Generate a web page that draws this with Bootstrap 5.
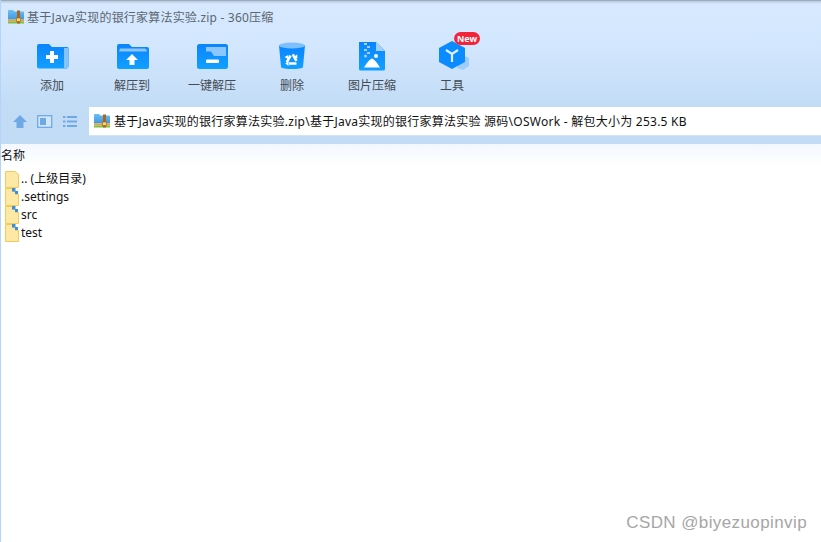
<!DOCTYPE html>
<html lang="zh">
<head>
    <meta charset="UTF-8">
    <title>360压缩</title>
    <link href="https://cdn.jsdelivr.net/npm/bootstrap@5.3.0/dist/css/bootstrap.min.css" rel="stylesheet">
    <style>
        html, body { height: 100%; }
        body {
            font-family: "Noto Sans", "Noto Sans CJK SC", sans-serif;
            font-size: 12px;
            color: #111;
            background: #fff;
            overflow: hidden;
        }
        .app-win { height: 542px; border-left: 1px solid #b5d5f8; position: relative; }
        .app-head {
            height: 144px;
            background: linear-gradient(180deg, #d6e9ff 0, #d2e6fd 50px, #c2dcf6 106px, #c2dcf6 144px);
            position: relative;
        }
        .app-head::before {
            content: ""; position: absolute; left: 0; right: 0; top: 0; height: 4px;
            background: linear-gradient(180deg, #8f9cab 0, rgba(180, 198, 218, .7) 40%, rgba(214, 233, 255, 0) 100%);
        }
        .title-row { height: 32px; padding: 10px 0 0 7px; color: #5c6670; gap: 3px; }
        .title-row svg { margin-top: -1px; }
        .title-row span { line-height: 16px; letter-spacing: .2px; }
        .tool-row { padding-left: 11px; height: 72px; }
        .tool-item { width: 80px; position: relative; color: #444b52; padding-top: 10px; }
        .tool-ico { width: 34px; height: 30px; display: block; overflow: visible; }
        .tool-lbl { margin-top: 5px; line-height: 18px; }
        .new-tag {
            position: absolute; left: 42px; top: 0; width: 26px; height: 13px;
            border-radius: 7px; background: #f5233a; color: #fff;
            font-size: 9px; font-weight: 700; line-height: 13px; text-align: center;
        }
        .addr-row { height: 28px; margin-top: 3px; }
        .nav-btns { width: 88px; padding-left: 11px; gap: 9px; }
        .addr-box {
            background: #fff; height: 29px; padding-left: 5px; gap: 4px;
            border-bottom: 1px solid #d5e4f4; color: #111; white-space: nowrap;
        }
        .addr-box span { letter-spacing: .25px; padding-top: 2px; }
        .list-head {
            height: 22px; line-height: 24px;
            background: linear-gradient(180deg, #f3f8fe 0, #ffffff 100%);
        }
        .file-list { padding: 4px 0 0 4px; }
        .file-row { height: 18px; gap: 2px; line-height: 18px; }
        .file-row svg { flex: none; }
        .wmark {
            position: absolute; right: 14px; bottom: 7px;
            font-family: "Liberation Sans", sans-serif; font-size: 17px; color: #a6a6a6; letter-spacing: .4px;
        }
    </style>
</head>
<body>
<svg width="0" height="0" class="position-absolute">
    <defs>
        <linearGradient id="blueg" x1="0" y1="0" x2="0" y2="1">
            <stop offset="0" stop-color="#0a84ff"/><stop offset="1" stop-color="#12a0ff"/>
        </linearGradient>
        <linearGradient id="zipg" x1="0" y1="0" x2="0" y2="1">
            <stop offset="0" stop-color="#6cc0f5"/><stop offset="1" stop-color="#3f97e0"/>
        </linearGradient>
        <symbol id="zipico" viewBox="0 0 16 16">
            <path d="M0 2a1 1 0 0 1 1-1h4l1.500 1.500H15a1 1 0 0 1 1 1v7H0z" fill="url(#zipg)"/>
            <rect y="10.500" width="16" height="2" fill="#f0a030"/>
            <rect y="12.500" width="16" height="2" fill="#7cc04a"/>
            <rect x="9" y="1.500" width="3" height="13" fill="#a8671e"/>
            <rect x="8.500" y="9" width="4" height="3.500" fill="#f7d774" stroke="#a8671e" stroke-width=".7"/>
        </symbol>
        <symbol id="folderico" viewBox="0 0 14 17">
            <path d="M.5.500h9.500l3.500 3v13H.5z" fill="#fee8a6" stroke="#f3cb5c"/>
        </symbol>
        <symbol id="zfolderico" viewBox="0 0 14 18">
            <path d="M.5.500h7v3h3v3h3v11H.5z" fill="#fee8a6" stroke="#f3cb5c"/>
            <rect x="7" y="0" width="3.500" height="3.500" fill="#3f8fd8"/>
            <rect x="10" y="3" width="3" height="3" fill="#3f8fd8"/>
        </symbol>
    </defs>
</svg>

<div class="app-win d-flex flex-column">
    <div class="app-head">
        <div class="title-row d-flex align-items-start">
            <svg width="16" height="16"><use href="#zipico"/></svg>
            <span>基于Java实现的银行家算法实验.zip - 360压缩</span>
        </div>

        <div class="tool-row d-flex">
            <div class="tool-item d-flex flex-column align-items-center">
                <svg class="tool-ico" viewBox="0 0 34 30">
                    <path d="M2 4a2 2 0 0 1 2-2h10l3 3h15a1.500 1.500 0 0 1 1.500 1.500v18a2 2 0 0 1-2 2H4a2 2 0 0 1-2-2z" fill="url(#blueg)"/>
                    <rect x="29" y="6" width="4" height="20" fill="#85c2ff"/>
                    <path d="M15 9h4v4h4v4h-4v4h-4v-4h-4v-4h4z" fill="#fff"/>
                </svg>
                <div class="tool-lbl">添加</div>
            </div>
            <div class="tool-item d-flex flex-column align-items-center">
                <svg class="tool-ico" viewBox="0 0 34 30">
                    <path d="M2 4a2 2 0 0 1 2-2h10l3 3h15a2 2 0 0 1 2 2v18a2 2 0 0 1-2 2H4a2 2 0 0 1-2-2z" fill="url(#blueg)"/>
                    <path d="M4 9.500l1-3h24.500a2 2 0 0 1 2 1.500l.5 1.500z" fill="#8cc6ff"/>
                    <path d="M17 12l6 6h-3.500v5h-5v-5H11z" fill="#fff"/>
                </svg>
                <div class="tool-lbl">解压到</div>
            </div>
            <div class="tool-item d-flex flex-column align-items-center">
                <svg class="tool-ico" viewBox="0 0 34 30">
                    <rect x="2" y="2" width="31" height="25" rx="2.500" fill="url(#blueg)"/>
                    <path d="M11 5h20v9H19l-3-4.500h-5z" fill="#8cc6ff"/>
                    <rect x="11" y="17.500" width="13" height="3.500" rx="1" fill="#fff"/>
                </svg>
                <div class="tool-lbl">一键解压</div>
            </div>
            <div class="tool-item d-flex flex-column align-items-center">
                <svg class="tool-ico" viewBox="0 0 34 30">
                    <path d="M4 3.500h26l-2 21.500c-.2 1.500-5.500 2-11 2s-10.800-.5-11-2z" fill="url(#blueg)"/>
                    <ellipse cx="17" cy="3.500" rx="13" ry="3" fill="#7cc0ff"/>
                    <path d="M17 11l6 10.500H11z" fill="none" stroke="#fff" stroke-width="2.600" stroke-linejoin="round" stroke-dasharray="7.500 4.600" stroke-dashoffset="-1.500"/>
                    <path d="M22.200 12.500l.2 4-3.500-1.800zM13.500 19l-3.200 2.500 3.200 2.500zM9.500 15l3.500 2 .3-4z" fill="#fff"/>
                </svg>
                <div class="tool-lbl">删除</div>
            </div>
            <div class="tool-item d-flex flex-column align-items-center">
                <svg class="tool-ico" viewBox="0 0 34 30">
                    <path d="M4 0h17l9 9v18a1.500 1.500 0 0 1-1.500 1.500h-23A1.500 1.500 0 0 1 4 27z" fill="url(#blueg)"/>
                    <path d="M21 0l9 9h-9z" fill="#9fd0ff"/>
                    <path d="M9 1h3v2H9zM12 4h3v2h-3zM9 7h3v2H9zM12 10h3v2h-3z" fill="#9fd0ff"/>
                    <circle cx="10.500" cy="14" r="1.500" fill="#9fd0ff"/>
                    <circle cx="21" cy="14" r="2" fill="#fff"/>
                    <path d="M9 25.500c2-3 5-8 8-9 3 1 6 6 8 9z" fill="#fff"/>
                </svg>
                <div class="tool-lbl">图片压缩</div>
            </div>
            <div class="tool-item d-flex flex-column align-items-center">
                <svg class="tool-ico" viewBox="0 0 34 30">
                    <path d="M27 13l7 3v8l-6 4-6-2z" fill="#9fcdfb"/>
                    <path d="M17-1l13 7v14l-13 7-13-7V6z" fill="#0a8bff"/>
                    <path d="M11 8l6 4 6-4M17 12v8" fill="none" stroke="#dff0ff" stroke-width="2.200"/>
                </svg>
                <div class="new-tag">New</div>
                <div class="tool-lbl">工具</div>
            </div>
        </div>

        <div class="addr-row d-flex">
            <div class="nav-btns d-flex align-items-center">
                <svg width="16" height="15" viewBox="0 0 16 15"><path d="M8 1l7 7h-3.500v6h-7V8H1z" fill="#6ea9e6"/></svg>
                <svg width="16" height="15" viewBox="0 0 16 15"><rect x=".7" y="1.700" width="14" height="11.600" fill="#d3e6fa" stroke="#6ea9e6" stroke-width="1.300"/><rect x="3" y="4" width="6" height="7" fill="#6ea9e6"/></svg>
                <svg width="16" height="15" viewBox="0 0 16 15"><path d="M1 2h2.500v2H1zM5 2h10v2H5zM1 6.500h2.500v2H1zM5 6.500h10v2H5zM1 11h2.500v2H1zM5 11h10v2H5z" fill="#6ea9e6"/></svg>
            </div>
            <div class="addr-box flex-grow-1 d-flex align-items-center">
                <svg width="16" height="16"><use href="#zipico"/></svg>
                <span>基于Java实现的银行家算法实验.zip\基于Java实现的银行家算法实验 源码\OSWork - 解包大小为 253.5 KB</span>
            </div>
        </div>
    </div>

    <div class="list-head">名称</div>

    <div class="file-list">
        <div class="file-row d-flex align-items-center">
            <svg width="14" height="17"><use href="#folderico"/></svg><span>.. (上级目录)</span>
        </div>
        <div class="file-row d-flex align-items-center">
            <svg width="14" height="18"><use href="#zfolderico"/></svg><span>.settings</span>
        </div>
        <div class="file-row d-flex align-items-center">
            <svg width="14" height="18"><use href="#zfolderico"/></svg><span>src</span>
        </div>
        <div class="file-row d-flex align-items-center">
            <svg width="14" height="18"><use href="#zfolderico"/></svg><span>test</span>
        </div>
    </div>

    <div class="wmark">CSDN @biyezuopinvip</div>
</div>

<script src="https://cdn.jsdelivr.net/npm/bootstrap@5.3.0/dist/js/bootstrap.bundle.min.js"></script>
</body>
</html>
